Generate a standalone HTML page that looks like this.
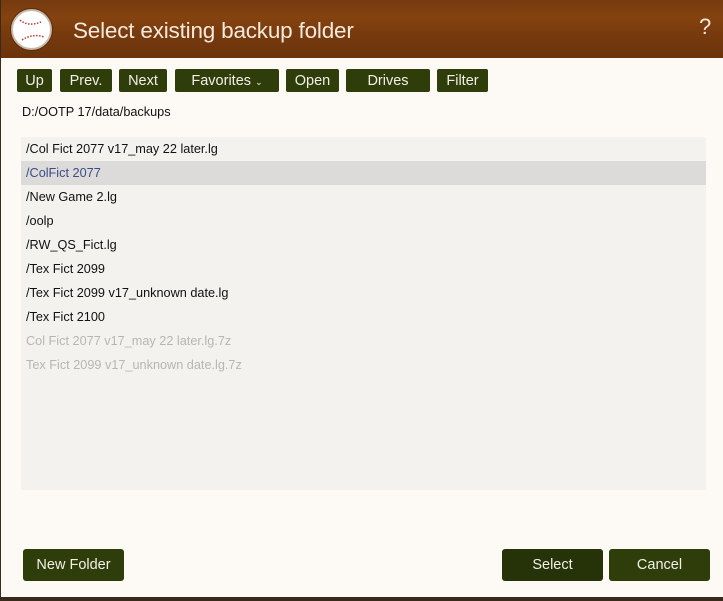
<!DOCTYPE html>
<html><head><style>
*{margin:0;padding:0;box-sizing:border-box}
body{width:723px;height:601px;overflow:hidden;background:#3a2a1c;font-family:"Liberation Sans",sans-serif;position:relative}
.dlg{position:absolute;left:1px;top:0;width:722px;height:597px;background:#fdfaf6}
.hdr{position:absolute;left:0;top:0;width:722px;height:58px;background:linear-gradient(180deg,#763a10 0%,#84420f 30%,#773a0e 60%,#6b330c 100%)}
.title{position:absolute;left:72px;top:18px;font-size:22.5px;color:#f6e9dc;letter-spacing:-0.2px}
.q{position:absolute;left:698px;top:14px;font-size:22px;color:#f6e9dc}
.ball{position:absolute;left:10px;top:9px;width:41px;height:41px;border-radius:50%;background:#fff;border:2px solid #c9b9a8;box-shadow:0 0 0 1px #5a2a08}
.b{position:absolute;background:#2f3d0b;color:#f2f0e6;font-size:14.5px;text-align:center;border-radius:2px;line-height:25px;height:23px;top:69px}
.bb{position:absolute;background:#2f3d0b;color:#f2f0e6;font-size:14.5px;text-align:center;border-radius:3px;line-height:33px;height:32px;top:549px}
.path{position:absolute;left:21px;top:105px;font-size:12.7px;color:#111}
.list{position:absolute;left:20px;top:137px;width:685px;height:353px;background:#f4f2ef}
.r{height:24px;line-height:24px;font-size:12.7px;padding-left:5px;color:#111}
.sel{background:#dcdbd9;color:#3b4c86}
.g{color:#b8b6b3}
</style></head><body>
<div class="dlg">
<div class="hdr">
<div class="ball"><svg width="37" height="37" viewBox="0 0 37 37"><path d="M7 9 Q15 16 28 11" stroke="#c33" stroke-width="1.5" fill="none" stroke-dasharray="1.5 1.5"/><path d="M9 29 Q20 22 31 26" stroke="#c33" stroke-width="1.5" fill="none" stroke-dasharray="1.5 1.5"/></svg></div>
<div class="title">Select existing backup folder</div>
<div class="q">?</div>
</div>
<div class="b" style="left:16px;width:35px">Up</div>
<div class="b" style="left:59px;width:52px">Prev.</div>
<div class="b" style="left:118px;width:48px">Next</div>
<div class="b" style="left:174px;width:104px">Favorites <span style="font-size:9px">&#8964;</span></div>
<div class="b" style="left:285px;width:53px">Open</div>
<div class="b" style="left:345px;width:84px">Drives</div>
<div class="b" style="left:436px;width:51px">Filter</div>
<div class="path">D:/OOTP 17/data/backups</div>
<div class="list">
<div class="r">/Col Fict 2077 v17_may 22 later.lg</div>
<div class="r sel">/ColFict 2077</div>
<div class="r">/New Game 2.lg</div>
<div class="r">/oolp</div>
<div class="r">/RW_QS_Fict.lg</div>
<div class="r">/Tex Fict 2099</div>
<div class="r">/Tex Fict 2099 v17_unknown date.lg</div>
<div class="r">/Tex Fict 2100</div>
<div class="r g">Col Fict 2077 v17_may 22 later.lg.7z</div>
<div class="r g">Tex Fict 2099 v17_unknown date.lg.7z</div>
</div>
<div class="bb" style="left:22px;width:101px">New Folder</div>
<div class="bb" style="left:501px;width:101px;background:#263208">Select</div>
<div class="bb" style="left:608px;width:101px">Cancel</div>
</div>
</body></html>
